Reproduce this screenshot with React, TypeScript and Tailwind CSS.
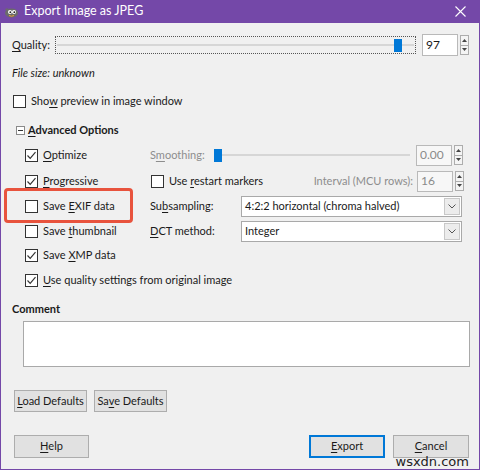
import * as React from "react";

const FONT = { fontFamily: 'Lato, "Noto Sans", sans-serif' };

function U({ children }: { children: React.ReactNode }) {
  return <span className="underline underline-offset-2">{children}</span>;
}

function Box({ checked }: { checked?: boolean }) {
  return (
    <span className="flex h-[13px] w-[13px] shrink-0 items-center justify-center border border-[#333333] bg-white">
      {checked && (
        <svg width="11" height="11" viewBox="0 0 11 11">
          <path d="M1.5 5.5 L4.2 8.3 L9.5 2.2" fill="none" stroke="#333" strokeWidth="1.2" />
        </svg>
      )}
    </span>
  );
}

function Check({ checked, children }: { checked?: boolean; children: React.ReactNode }) {
  return (
    <div className="flex items-center gap-[5px] whitespace-nowrap">
      <Box checked={checked} />
      <span>{children}</span>
    </div>
  );
}

function SpinArrows() {
  return (
    <div className="ml-[2px] flex h-[20px] w-[9px] flex-col">
      <div className="flex flex-1 items-center justify-center border border-[#adadad] bg-[#f4f4f4]">
        <svg width="5" height="3" viewBox="0 0 5 3">
          <path d="M0 3 L2.5 0 L5 3 Z" fill="#444" />
        </svg>
      </div>
      <div className="flex flex-1 items-center justify-center border border-t-0 border-[#adadad] bg-[#f4f4f4]">
        <svg width="5" height="3" viewBox="0 0 5 3">
          <path d="M0 0 L2.5 3 L5 0 Z" fill="#444" />
        </svg>
      </div>
    </div>
  );
}

function Spin({ value, dim }: { value: string; dim?: boolean }) {
  return (
    <div className="flex items-center">
      <div
        className={`flex h-[21px] w-[36px] items-center border border-[#b9b9b9] pl-[3px] text-[12px] ${
          dim ? "bg-[#f7f7f7] text-[#8a8a8a]" : "bg-white text-black"
        }`}
      >
        {value}
      </div>
      <SpinArrows />
    </div>
  );
}

function Dropdown({ value }: { value: string }) {
  return (
    <div className="flex h-[21px] w-[221px] items-center border border-[#a9a9a9] bg-white">
      <span className="flex-1 whitespace-nowrap pl-[3px]">{value}</span>
      <span className="mr-[1px] flex h-[17px] w-[16px] items-center justify-center border border-[#c8c8c8] bg-[#ececec]">
        <svg width="8" height="5" viewBox="0 0 8 5">
          <path d="M0.5 0.5 L4 4 L7.5 0.5" fill="none" stroke="#555" strokeWidth="1" />
        </svg>
      </span>
    </div>
  );
}

function Button({ children, w, primary }: { children: React.ReactNode; w: string; primary?: boolean }) {
  return (
    <div
      className={`flex items-center justify-center whitespace-nowrap bg-[#e1e1e1] ${w} ${
        primary ? "border-2 border-[#0078d7]" : "border border-[#adadad]"
      }`}
    >
      {children}
    </div>
  );
}

export default function App() {
  return (
    <div
      className="relative flex h-[470px] w-[480px] flex-col border-x border-b border-[#7448a8] bg-[#f0f0f0] text-[11px] text-[#1a1a1a]"
      style={FONT}
    >
      {/* title bar */}
      <div className="-mx-px flex h-[23px] shrink-0 items-center bg-[#7448a8] pl-[4px] pr-[14px] text-white">
        <svg width="15" height="12" viewBox="0 0 15 12">
          <ellipse cx="7.5" cy="7" rx="6.5" ry="4.5" fill="#6b6b6b" />
          <path d="M1 3 L3 6 L4 2 Z" fill="#6b6b6b" />
          <circle cx="6" cy="6" r="2" fill="#fff" />
          <circle cx="10" cy="6" r="2" fill="#fff" />
          <circle cx="6.3" cy="6.2" r="0.9" fill="#222" />
          <circle cx="10.3" cy="6.2" r="0.9" fill="#222" />
          <path d="M5 9.5 Q7.5 11 10 9.5" stroke="#f0a030" strokeWidth="1" fill="none" />
        </svg>
        <span className="ml-[5px] text-[12.5px]">Export Image as JPEG</span>
        <span className="ml-auto">
          <svg width="11" height="11" viewBox="0 0 11 11">
            <path d="M0.5 0.5 L10.5 10.5 M10.5 0.5 L0.5 10.5" stroke="#fff" strokeWidth="1.1" />
          </svg>
        </span>
      </div>

      <div className="flex flex-col pl-[11px] pr-[10px]">
        {/* quality */}
        <div className="mt-[11px] flex h-[22px] items-center">
          <span className="w-[43px]">
            <U>Q</U>uality:
          </span>
          <div className="flex h-[18px] w-[361px] items-center border border-dotted border-[#555] px-[1px]">
            <div className="h-[2px] flex-1 bg-[#d6d6d6]" />
            <div className="h-[13px] w-[8px] bg-[#0078d7]" />
            <div className="h-[2px] w-[12px] bg-[#d6d6d6]" />
          </div>
          <div className="ml-[6px] flex items-center">
            <div className="flex h-[22px] w-[36px] items-center border border-[#b9b9b9] bg-white pl-[3px] text-[12px]">97</div>
            <SpinArrows />
          </div>
        </div>

        {/* file size */}
        <div className="mt-[8px] flex h-[18px] items-center italic">File size: unknown</div>

        <div className="mt-[10px] flex h-[18px] items-center pl-[1px]">
          <Check>
            Sho<U>w</U> preview in image window
          </Check>
        </div>

        {/* advanced */}
        <div className="mt-[11px] flex h-[18px] items-center pl-[4px]">
          <span className="flex h-[9px] w-[9px] items-center justify-center border border-[#8a8a8a] bg-white">
            <span className="h-px w-[5px] bg-[#333]" />
          </span>
          <span className="ml-[3px] font-bold">
            <U>A</U>dvanced Options
          </span>
        </div>

        <div className="mt-[3px] flex flex-col pl-[13px]">
          <div className="flex h-[26px] items-center">
            <div className="w-[125px]">
              <Check checked>
                <U>O</U>ptimize
              </Check>
            </div>
            <span className="w-[64px] whitespace-nowrap text-[#8d8d8d]">
              S<U>m</U>oothing:
            </span>
            <div className="flex w-[196px] items-center">
              <div className="h-[13px] w-[8px] bg-[#0078d7]" />
              <div className="h-[2px] flex-1 bg-[#d6d6d6]" />
            </div>
            <div className="ml-[6px]">
              <Spin value="0.00" dim />
            </div>
          </div>

          <div className="flex h-[26px] items-center">
            <div className="w-[126px]">
              <Check checked>
                <U>P</U>rogressive
              </Check>
            </div>
            <Check>
              Use <U>r</U>estart markers
            </Check>
            <span className="ml-auto mr-[4px] whitespace-nowrap text-[#8d8d8d]">Interval (MCU rows):</span>
            <div className="mr-[5px]">
              <Spin value="16" dim />
            </div>
          </div>

          <div className="relative flex h-[25px] items-center">
            <div className="w-[125px]">
              <Check>
                Save <U>E</U>XIF data
              </Check>
            </div>
            <span className="w-[91px]">
              Su<U>b</U>sampling:
            </span>
            <Dropdown value="4:2:2 horizontal (chroma halved)" />
            <div className="absolute left-[-21px] top-[-6px] h-[35px] w-[129px] rounded-[4px] border-[3px] border-[#e8533d]" />
          </div>

          <div className="flex h-[24px] items-center">
            <div className="w-[125px]">
              <Check>
                Save <U>t</U>humbnail
              </Check>
            </div>
            <span className="w-[91px]">
              <U>D</U>CT method:
            </span>
            <Dropdown value="Integer" />
          </div>

          <div className="flex h-[25px] items-center">
            <Check checked>
              Save <U>X</U>MP data
            </Check>
          </div>

          <div className="flex h-[25px] items-center">
            <Check checked>
              <U>U</U>se quality settings from original image
            </Check>
          </div>
        </div>

        {/* comment */}
        <div className="mt-[8px] flex h-[16px] items-center font-bold">Comment</div>
        <div className="ml-[11px] mr-[-1px] mt-[4px] h-[46px] border border-[#a9a9a9] bg-white" />

        <div className="mt-[23px] flex h-[22px] gap-[7px] pl-[2px]">
          <Button w="w-[73px]">
            <span>
              <U>L</U>oad Defaults
            </span>
          </Button>
          <Button w="w-[73px]">
            <span>
              Sa<U>v</U>e Defaults
            </span>
          </Button>
        </div>

        <div className="mt-[23px] flex h-[23px] pl-[2px]">
          <Button w="w-[75px]">
            <span>
              <U>H</U>elp
            </span>
          </Button>
          <div className="ml-auto flex gap-[8px]">
            <Button w="w-[76px]" primary>
              <span>
                <U>E</U>xport
              </span>
            </Button>
            <Button w="w-[76px]">
              <span>
                <U>C</U>ancel
              </span>
            </Button>
          </div>
        </div>
      </div>

      <span
        className="absolute bottom-[0px] right-[10px] text-[13px] leading-[15px] text-[#222]"
        style={{ fontFamily: '"DejaVu Sans", sans-serif' }}
      >
        wsxdn.com
      </span>
    </div>
  );
}
